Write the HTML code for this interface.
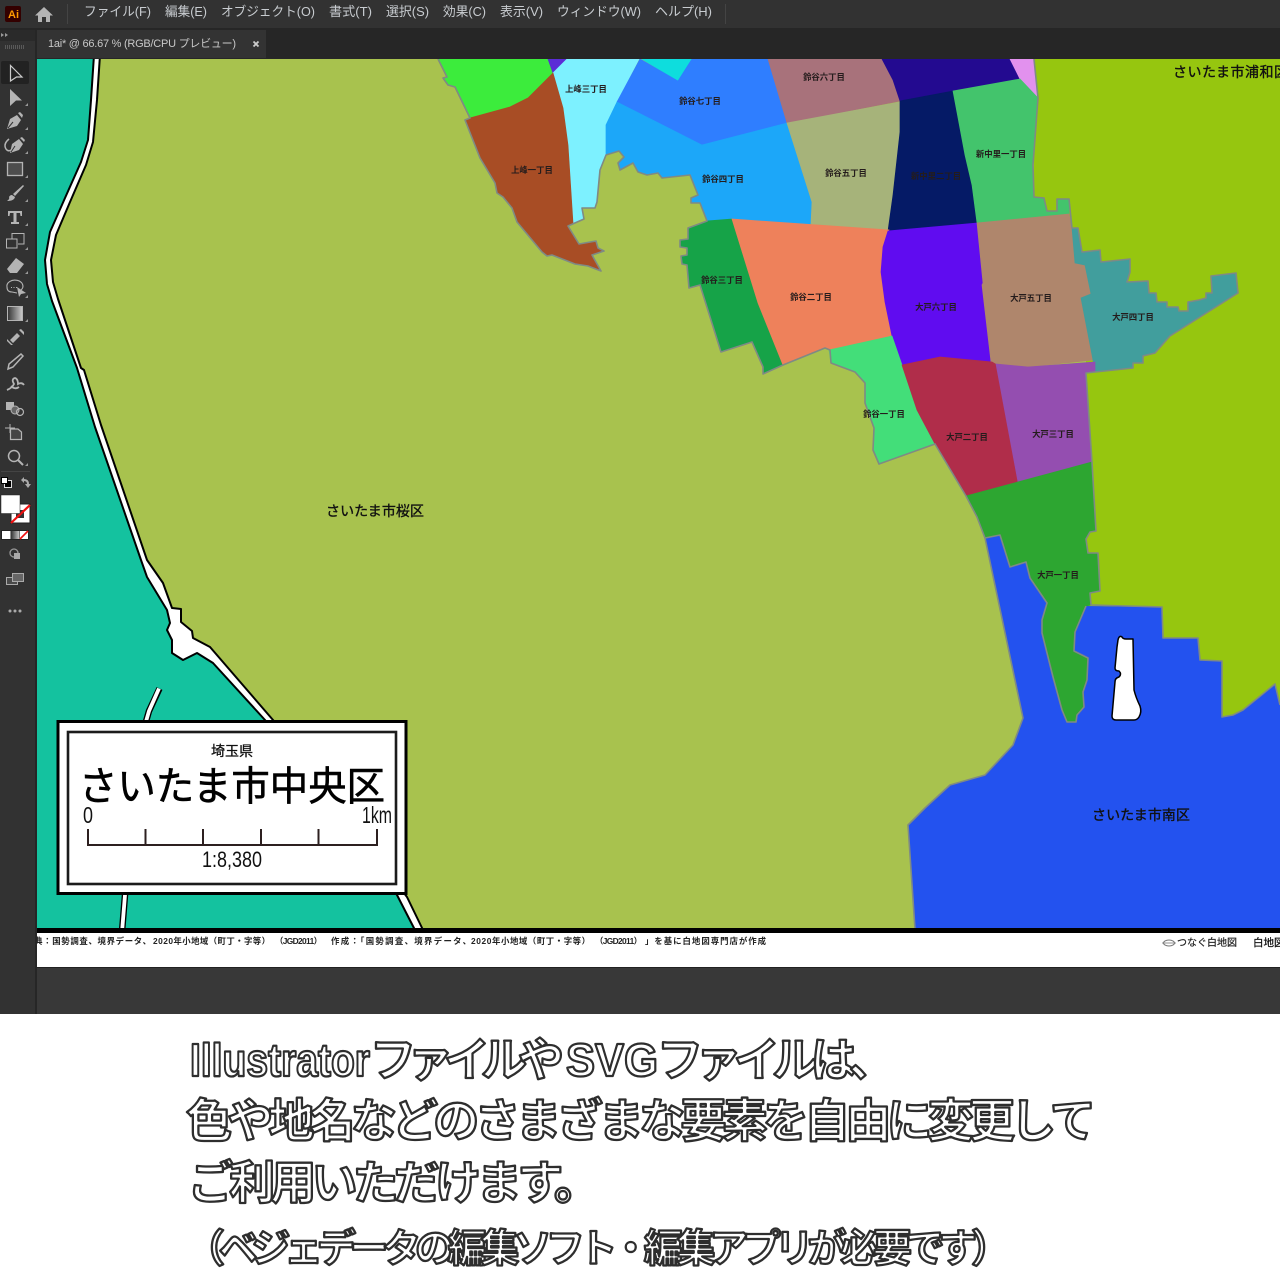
<!DOCTYPE html>
<html><head><meta charset="utf-8"><style>
html,body{margin:0;padding:0;background:#fff}
svg{display:block}
text{font-family:"Liberation Sans","Noto Sans CJK JP",sans-serif}
.r polygon{fill:currentColor;stroke:currentColor;stroke-width:.7}
.e{fill:none;stroke:#7f8a84;stroke-width:1.6;stroke-linejoin:round}
.l{font-size:8.4px;font-weight:700;fill:#241c1c;text-anchor:middle}
.c{font-size:14px;fill:#111;stroke:#111;stroke-width:.35}
.m{font-size:13px;fill:#c8ccd0}
.b{fill:#fff;stroke:#2e2e2e;stroke-width:2.3;stroke-linejoin:round;font-size:46px;font-weight:700}
.f{font-size:8.4px;font-weight:700;fill:#222}
.i{fill:#b4b4b4}
.o{fill:none;stroke:#b4b4b4;stroke-width:1.5}
</style></head><body>
<svg width="1280" height="1280" viewBox="0 0 1280 1280" xmlns="http://www.w3.org/2000/svg">
<defs>
<linearGradient id="g1"><stop offset="0" stop-color="#333"/><stop offset="1" stop-color="#ccc"/></linearGradient>
<clipPath id="cv"><rect x="37" y="59" width="1243" height="910"/></clipPath>
</defs>
<rect width="1280" height="1280" fill="#fff"/>
<!-- chrome -->
<rect width="1280" height="1014" fill="#383838"/>
<rect width="1280" height="28" fill="#323232"/>
<rect y="28" width="1280" height="31" fill="#262626"/>
<rect x="37" y="30" width="229" height="28" fill="#333"/>
<rect x="0" y="30" width="35" height="984" fill="#323232"/>
<rect x="0" y="30" width="35" height="11" fill="#2a2a2a"/>
<rect x="35" y="30" width="2" height="984" fill="#262626"/>
<rect x="5" y="6" width="16" height="16" rx="2" fill="#330000"/>
<text x="8" y="18" style="font-size:11px;font-weight:700;fill:#ff9a00">Ai</text>
<path class="i" d="M44 7L35 15.5H38V22H42V17H46V22H50V15.5H53Z"/>
<rect x="67" y="4" width="1" height="20" fill="#444"/><rect x="725" y="4" width="1" height="20" fill="#444"/>
<text class="m" x="84" y="16" textLength="67" lengthAdjust="spacingAndGlyphs">ファイル(F)</text>
<text class="m" x="165" y="16" textLength="42" lengthAdjust="spacingAndGlyphs">編集(E)</text>
<text class="m" x="221" y="16" textLength="94" lengthAdjust="spacingAndGlyphs">オブジェクト(O)</text>
<text class="m" x="329" y="16" textLength="43" lengthAdjust="spacingAndGlyphs">書式(T)</text>
<text class="m" x="386" y="16" textLength="43" lengthAdjust="spacingAndGlyphs">選択(S)</text>
<text class="m" x="443" y="16" textLength="43" lengthAdjust="spacingAndGlyphs">効果(C)</text>
<text class="m" x="500" y="16" textLength="43" lengthAdjust="spacingAndGlyphs">表示(V)</text>
<text class="m" x="557" y="16" textLength="84" lengthAdjust="spacingAndGlyphs">ウィンドウ(W)</text>
<text class="m" x="655" y="16" textLength="57" lengthAdjust="spacingAndGlyphs">ヘルプ(H)</text>
<text x="48" y="47" textLength="188" style="font-size:11px;fill:#c8c8c8">1ai* @ 66.67 % (RGB/CPU プレビュー)</text>
<path d="M253.5 41.5l5 5m0-5l-5 5" stroke="#ccc" stroke-width="1.8"/>
<path d="M1 33l3 2-3 2zM5 33l3 2-3 2z" fill="#999"/>
<path d="M5 47H24" stroke="#5a5a5a" stroke-width="4" stroke-dasharray="1 1"/>

<!-- map -->
<g clip-path="url(#cv)">
<rect x="37" y="59" width="1243" height="870" fill="#a8c24e"/>
<polygon fill="#14c29f" points="37,59 97,59 94,100 90,140 84,163 68,200 53,233 48,260 50,283 55,300 80,369 98,426 144,560 150,577 167,608 175,625 175,650 183,655 200,650 220,660 268,720 400,895 420,930 37,930"/>
<polygon fill="#fff" stroke="#000" stroke-width="2" stroke-linejoin="round" points="100,55 97,100 93,142 86,165 70,202 56,235 51,260 53,282 58,299 81,368 84,370 101,425 147,560 163,583 172,608 181,609 181,622 192,631 193,638 210,647 273,720 407,897 424,932 416,932 397,895 265,720 213,663 197,653 183,660 172,653 172,640 167,630 170,623 167,610 147,577 141,560 95,427 77,368 52,301 47,284 45,260 50,232 65,198 81,162 88,140 91,100 94,55"/>
<path d="M159.500 688.500L149 711 145 725 125 895 122 932" fill="none" stroke="#000" stroke-width="6.500"/>
<path d="M159 688.500L149 711 145 725 125 895 122 932" fill="none" stroke="#fff" stroke-width="3.800"/>

<polygon fill="#2352ef" points="985,538 1023,718 1013,745 985,775 950,785 925,808 908,825 915,929 1280,929 1280,600 1090,600 1000,535"/>
<polygon fill="#96c60f" points="1034,59 1280,59 1280,705 1275,684 1243,710 1233,715 1222,717 1222,661 1200,660 1198,638 1163,638 1162,607 1086,606 1086,300 1034,200"/>
<g class="r">
<polygon color="#3cec3c" points="438,59 447,77 443,78 448,85 455,87 470,118 510,107 528,98 553,73 548,59"/>
<polygon color="#5b2cd6" points="548,59 567,59 553,73"/>
<polygon color="#7df1ff" points="567,59 639,59 617,102 606,125 606,155 600,170 597,202 595,208 582,208 584,219 573,223 568,145 563,108 553,73"/>
<polygon color="#0edddd" points="642,59 692,59 678,81"/>
<polygon color="#2f7eff" points="640,59 678,81 692,59 768,59 787,123 702,145 617,102"/>
<polygon color="#1ca7f9" points="617,102 702,145 787,123 812,202 811,224 732,219 707,221 700,203 691,203 691,198 698,195 690,175 662,178 658,173 647,175 638,172 633,163 620,170 618,163 624,157 619,151 606,155 606,125"/>
<polygon color="#a8727b" points="768,59 882,59 893,80 900,101 787,123"/>
<polygon color="#a6b37a" points="787,123 900,102 900,135 895,170 889,230 811,224 812,202"/>
<polygon color="#230a90" points="882,59 1010,59 1020,79 953,91 900,101 893,80"/>
<polygon color="#e291ee" points="1010,59 1034,59 1038,99 1020,79"/>
<polygon color="#051a66" points="900,101 953,91 965,155 972,185 977,223 888,231 893,195 900,132"/>
<polygon color="#43c46c" points="953,91 1020,79 1038,98 1033,165 1034,197 1044,198 1047,211 1057,211 1057,199 1069,199 1069,214 977,223 972,185 965,155"/>
<polygon color="#a84d25" points="553,73 528,98 510,107 470,118 465,120 480,158 495,183 497,193 503,197 512,208 517,222 542,252 547,256 552,255 575,264 588,266 601,271 592,255 604,251 598,248 596,241 579,244 568,226 573,223 568,145 563,108"/>
<polygon color="#16a348" points="707,221 688,228 688,239 680,240 680,247 687,248 687,255 681,256 682,264 687,265 689,288 700,285 721,352 752,342 763,367 763,374 783,365 758,303 732,219"/>
<polygon color="#ee815b" points="732,219 889,230 883,247 881,272 885,302 892,336 830,350 825,348 783,365 758,303"/>
<polygon color="#600cf0" points="888,231 977,223 983,283 982,285 991,362 940,357 902,365 892,336 885,302 881,272 883,247"/>
<polygon color="#af866c" points="977,223 1069,214 1072,228 1075,263 1085,265 1091,294 1081,298 1093,360 1028,367 995,364 991,362 982,285 983,283"/>
<polygon color="#419e9d" points="1072,228 1078,228 1082,252 1100,250 1101,262 1130,259 1130,272 1127,282 1148,281 1149,293 1156,293 1157,302 1167,302 1167,307 1178,307 1179,311 1188,311 1188,302 1199,300 1206,298 1206,293 1212,293 1211,276 1236,273 1238,293 1170,336 1155,353 1143,356 1143,363 1133,363 1133,368 1095,372 1093,360 1081,298 1091,294 1085,265 1075,263"/>
<polygon color="#43de79" points="829,350 892,336 902,365 917,410 935,444 879,464 873,450 874,428 865,403 865,383 855,372 831,363"/>
<polygon color="#b02d4a" points="902,365 940,357 992,362 997,365 1018,482 966,496 935,444 917,410"/>
<polygon color="#944eb0" points="996,364 1028,367 1095,362 1095,372 1086,373 1092,462 1018,482"/>
<polygon color="#2da631" points="966,496 1092,462 1096,531 1090,532 1086,539 1088,553 1098,553 1100,591 1090,593 1091,605 1086,606 1075,632 1074,651 1088,658 1087,680 1083,692 1084,707 1077,715 1076,722 1067,722 1062,710 1053,677 1042,633 1042,620 1047,603 1030,578 1026,562 1010,567 1000,535 985,538 977,517"/>
</g>
<polyline class="e" points="438,59 447,77 443,78 448,85 455,87 470,118 465,120 480,158 495,183 497,193 503,197 512,208 517,222 542,252 547,256 552,255 575,264 588,266 601,271 592,255 604,251 598,248 596,241 579,244 568,226 584,219 582,208 595,208 597,202 600,170 606,155 619,151 624,157 618,163 620,170 633,163 638,172 647,175 658,173 662,178 690,175 698,195 691,198 691,203 700,203 707,221 688,228 688,239 680,240 680,247 687,248 687,255 681,256 682,264 687,265 689,288 700,285 721,352 752,342 763,367 763,374 783,365 825,348 830,350 831,363 855,372 865,383 865,403 874,428 873,450 879,464 935,444 966,496 977,517 985,538 1023,718 1013,745 985,775 950,785 925,808 908,825 915,929"/>
<polyline class="e" points="1034,59 1038,98 1033,165 1034,197 1044,198 1047,211 1057,211 1057,199 1069,199 1072,228 1078,228 1082,252 1100,250 1101,262 1130,259 1130,272 1127,282 1148,281 1149,293 1156,293 1157,302 1167,302 1167,307 1178,307 1179,311 1188,311 1188,302 1199,300 1206,298 1206,293 1212,293 1211,276 1236,273 1238,293 1170,336 1155,353 1143,356 1143,363 1133,363 1133,368 1095,372 1086,373 1092,462 1096,531 1090,532 1086,539 1088,553 1098,553 1100,591 1090,593 1091,605 1162,607 1163,638 1198,638 1200,660 1222,661 1222,717 1233,715 1243,710 1275,684 1280,705"/>
<polyline class="e" points="985,538 1000,535 1010,567 1026,562 1030,578 1047,603 1042,620 1042,633 1053,677 1062,710 1067,722 1076,722 1077,715 1084,707 1083,692 1087,680 1088,658 1074,651 1075,632 1086,606"/>
<path fill="#fff" stroke="#000" stroke-width="1.500" stroke-linejoin="round" d="M1118 640Q1119 635 1122 637Q1123 639 1126 639H1133L1134 690Q1136 698 1140 706Q1142 712 1139 717Q1137 720 1134 720H1116Q1112 720 1112 716L1115 682Q1115 678 1119 677Q1122 674 1119 671Q1115 671 1115 668L1117 647Z"/>

<text class="l" x="586" y="92">上峰三丁目</text>
<text class="l" x="700" y="104">鈴谷七丁目</text>
<text class="l" x="824" y="80">鈴谷六丁目</text>
<text class="l" x="532" y="173">上峰一丁目</text>
<text class="l" x="723" y="182">鈴谷四丁目</text>
<text class="l" x="846" y="176">鈴谷五丁目</text>
<text class="l" x="936" y="179">新中里二丁目</text>
<text class="l" x="1001" y="157">新中里一丁目</text>
<text class="l" x="722" y="283">鈴谷三丁目</text>
<text class="l" x="811" y="300">鈴谷二丁目</text>
<text class="l" x="936" y="310">大戸六丁目</text>
<text class="l" x="1031" y="301">大戸五丁目</text>
<text class="l" x="1133" y="320">大戸四丁目</text>
<text class="l" x="884" y="417">鈴谷一丁目</text>
<text class="l" x="967" y="440">大戸二丁目</text>
<text class="l" x="1053" y="437">大戸三丁目</text>
<text class="l" x="1058" y="578">大戸一丁目</text>
<text class="c" x="326" y="516" textLength="98">さいたま市桜区</text>
<text class="c" x="1092" y="820" textLength="98">さいたま市南区</text>
<text class="c" x="1173" y="77" textLength="115">さいたま市浦和区</text>

<!-- legend -->
<rect x="58" y="721.500" width="348" height="172" fill="#fff" stroke="#000" stroke-width="3"/>
<rect x="68" y="732" width="328" height="152" fill="#fff" stroke="#1c1c1c" stroke-width="2.600"/>
<text x="232" y="756" text-anchor="middle" style="font-size:14px;fill:#111;stroke:#111;stroke-width:.3">埼玉県</text>
<text x="79" y="800" textLength="306" lengthAdjust="spacingAndGlyphs" style="font-size:40px;fill:#000;stroke:#000;stroke-width:.6">さいたま市中央区</text>
<text x="83" y="823" textLength="10" lengthAdjust="spacingAndGlyphs" style="font-size:23px;fill:#111">0</text>
<text x="362" y="823" textLength="30" lengthAdjust="spacingAndGlyphs" style="font-size:23px;fill:#111">1km</text>
<path d="M88 829V845H377V829M145.500 829V845M203 829V845M261 829V845M318.500 829V845" fill="none" stroke="#2d2020" stroke-width="2"/>
<text x="202" y="867" textLength="60" lengthAdjust="spacingAndGlyphs" style="font-size:22px;fill:#111">1:8,380</text>

<!-- footer -->
<rect x="37" y="928" width="1243" height="5" fill="#000"/>
<rect x="37" y="933" width="1243" height="34" fill="#fff"/>
<text class="f" x="25" y="944" textLength="126">出典：国勢調査、境界データ、</text>
<text class="f" x="153" y="944" textLength="117">2020年小地域（町丁・字等）</text>
<text class="f" x="275" y="944" textLength="47">（JGD2011）</text>
<text class="f" x="331" y="944" textLength="140">作成：「国勢調査、境界データ、</text>
<text class="f" x="471" y="944" textLength="119">2020年小地域（町丁・字等）</text>
<text class="f" x="595" y="944" textLength="47">（JGD2011）</text>
<text class="f" x="645" y="944" textLength="121">」を基に白地図専門店が作成</text>
<ellipse cx="1169" cy="943" rx="5.500" ry="3" fill="none" stroke="#777" stroke-width="1"/>
<path d="M1162 943h14" stroke="#777" stroke-width=".8"/>
<text x="1177" y="946" textLength="60" style="font-size:10px;fill:#222;stroke:#222;stroke-width:.2">つなぐ白地図</text>
<text x="1253" y="946" style="font-size:10.500px;fill:#111;stroke:#111;stroke-width:.25">白地図</text>
<rect x="37" y="967" width="1243" height="1" fill="#222"/>
</g>

<!-- tools -->
<rect x="1" y="61" width="28" height="23" rx="2" fill="#222"/>
<path d="M10.500 65.500L22 77H16.500L10.500 81Z" fill="none" stroke="#ccc" stroke-width="1.200"/>
<path class="i" d="M10 89L22 100.500H16L10 106Z"/>
<path class="i" d="M7 129L10 119L17 115L21 120L17 126ZM18 113L20 112L23 115L22 118Z"/>
<path d="M8 128L13 122" stroke="#323232"/>
<path class="i" d="M10 153L12 144L19 139L23 144L19 150ZM20 138L22 137L25 140L24 142Z"/>
<path d="M11 152L15 146" stroke="#323232"/>
<path class="o" d="M9 139Q3 144 6 149Q8 152 11 150"/>
<rect x="7.500" y="162.500" width="15" height="13" fill="#4d4d4d" stroke="#b4b4b4" stroke-width="1.300"/>
<path class="i" d="M23 185L24 186L15 196L13 194ZM12 195L15 197Q14 201 7 201Q10 199 9 197Q10 195 12 195Z"/>
<path class="i" d="M8 211H22V216H20.500L20 213H16.500V222H19V224H11V222H13.500V213H10L9.500 216H8Z"/>
<path class="o" d="M12 239V233.500H24V244H18M6.500 239H17V248H6.500Z" style="stroke-width:1"/>
<path class="i" d="M16 258L24 264L17 273H10L7 269Z"/>
<path class="o" d="M7 287a8 6 0 1 1 14 3M7 287q0 5 5 5l5 1" style="stroke-width:1.100"/>
<path class="i" d="M17 287L26 293L21 294L19 297Z"/>
<path d="M11 287.500h7" stroke="#b4b4b4" stroke-dasharray="1 1.500"/>
<rect x="7.500" y="306.500" width="15" height="14" fill="url(#g1)" stroke="#b4b4b4"/>
<path class="i" d="M17 333L20 336L13 343L10 340ZM7 339L13 345L11 345L7 341ZM19 330L24 335L24 332L21 329Z"/>
<path class="o" d="M21 354L23 356L13 367L8 369L9 364Z"/>
<path class="o" d="M7 390Q12 388 14 384Q11 379 15 378Q18 379 18 384Q22 382 24 385M11 386Q15 390 19 387" style="stroke-width:1.800"/>
<rect x="6" y="402" width="8" height="8" fill="#b4b4b4"/>
<circle cx="15" cy="410" r="4" fill="#666" stroke="#b4b4b4"/><circle cx="20" cy="412" r="3.500" fill="none" stroke="#b4b4b4" stroke-width="1.200"/>
<path class="o" d="M10 424V433M5 428H15" style="stroke-width:1"/>
<path d="M10.500 429H18L21.500 432V439.500H10.500Z" fill="#444" stroke="#b4b4b4" stroke-width="1.200"/>
<circle cx="14" cy="456" r="5.500" class="o"/>
<path class="o" d="M18 460L23 465" style="stroke-width:2"/>
<path d="M28 103v3h-3zM28 127v3h-3zM28 151v3h-3zM28 175v3h-3zM28 199v3h-3zM28 223v3h-3zM28 247v3h-3zM28 271v3h-3zM28 295v3h-3zM28 319v3h-3zM28 463v3h-3z" fill="#999"/>
<rect x="1" y="471" width="29" height="1" fill="#444"/>
<rect x="4.500" y="480.500" width="7" height="7" fill="#000" stroke="#ddd" stroke-width="1"/>
<rect x="1.500" y="477.500" width="6" height="6" fill="#fff" stroke="#000" stroke-width="1"/>
<path d="M21 480L24 477V479Q29 479 29 484H31L28 488L25 484H27Q27 481 24 481V483Z" fill="#aaa"/>
<rect x="11" y="504" width="19" height="19" fill="#fff" stroke="#222" stroke-width="1"/>
<rect x="16" y="510" width="8" height="8" fill="#333"/>
<path d="M11 523L30 505" stroke="#f01010" stroke-width="2.200"/>
<rect x="1" y="495" width="19" height="18.500" fill="#fff" stroke="#222" stroke-width=".5"/>
<rect x="1" y="530" width="28" height="10" fill="#222"/>
<rect x="2" y="531" width="8.500" height="8" fill="#fff"/>
<rect x="11" y="531" width="8.500" height="8" fill="url(#g1)"/>
<rect x="20" y="531" width="8" height="8" fill="#fff"/>
<path d="M20 539L28 531" stroke="#f01010" stroke-width="1.600"/>
<circle cx="14" cy="553" r="4" fill="none" stroke="#999" stroke-width="1.300"/>
<rect x="14" y="553" width="6" height="6" fill="#aaa"/>
<rect x="6.500" y="577.500" width="11" height="7" fill="#4a4a4a" stroke="#aaa"/>
<rect x="12.500" y="573.500" width="11" height="8" fill="#666" stroke="#aaa"/>
<circle cx="10" cy="611" r="1.500" fill="#aaa"/><circle cx="15" cy="611" r="1.500" fill="#aaa"/><circle cx="20" cy="611" r="1.500" fill="#aaa"/>

<!-- bottom caption -->
<rect y="1014" width="1280" height="266" fill="#fff"/>
<text class="b" x="190" y="1076" textLength="180" lengthAdjust="spacingAndGlyphs">Illustrator</text>
<text class="b" x="370" y="1076" textLength="194">ファイルや</text>
<text class="b" x="566" y="1076" textLength="92" lengthAdjust="spacingAndGlyphs">SVG</text>
<text class="b" x="657" y="1076" textLength="238">ファイルは、</text>
<text class="b" x="186" y="1137" textLength="910">色や地名などのさまざまな要素を自由に変更して</text>
<text class="b" x="188" y="1199" textLength="412">ご利用いただけます。</text>
<text class="b" x="186" y="1262" textLength="824" style="font-size:39px">（ベジェデータの編集ソフト・編集アプリが必要です）</text>
</svg>
</body></html>
